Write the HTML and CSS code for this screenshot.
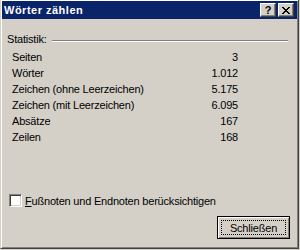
FILE: index.html
```html
<!DOCTYPE html>
<html lang="de">
<head>
    <meta charset="UTF-8">
    <title>Wörter zählen</title>
    <link rel="stylesheet" href="styles.css">
</head>
<body>
    <div class="window">
        <!-- Titelleiste -->
        <div class="titlebar">
            <span class="title">Wörter zählen</span>
            <div class="caption-buttons">
                <button class="cap-btn help">?</button>
                <button class="cap-btn close">
                    <svg width="8" height="7" viewBox="0 0 8 7" shape-rendering="crispEdges">
                        <path d="M0 0h2v1h-2z M6 0h2v1h-2z M1 1h2v1h-2z M5 1h2v1h-2z M2 2h4v1h-4z M3 3h2v1h-2z M2 4h4v1h-4z M1 5h2v1h-2z M5 5h2v1h-2z M0 6h2v1h-2z M6 6h2v1h-2z" fill="#000"/>
                    </svg>
                </button>
            </div>
        </div>

        <div class="dialog-body">
            <div class="group-label">
                <span>Statistik:</span>
                <span class="rule"></span>
            </div>

            <div class="stats">
                <span>Seiten</span><span class="num">3</span>
                <span>Wörter</span><span class="num">1.012</span>
                <span>Zeichen (ohne Leerzeichen)</span><span class="num">5.175</span>
                <span>Zeichen (mit Leerzeichen)</span><span class="num">6.095</span>
                <span>Absätze</span><span class="num">167</span>
                <span>Zeilen</span><span class="num">168</span>
            </div>

            <label class="check">
                <span class="box"></span>
                <span><u>F</u>ußnoten und Endnoten berücksichtigen</span>
            </label>

            <div class="actions">
                <button class="btn default"><span class="focus">Schließen</span></button>
            </div>
        </div>
    </div>
</body>
</html>
```

FILE: styles.css
```css
:root {
    --face: #d4d0c8;
    --shadow: #808080;
    --dark: #404040;
    --navy: #0a246a;
}

body {
    margin: 0;
    background: var(--face);
    font-family: 'Liberation Sans', Arial, sans-serif;
    font-size: 11px;
    color: #000;
}

.window {
    width: 299px;
    height: 249px;
    box-sizing: border-box;
    background: var(--face);
    border-left: 1px solid var(--face);
    border-right: 1px solid var(--dark);
    border-bottom: 1px solid var(--dark);
    box-shadow: inset 1px 1px #fff, inset -1px -1px var(--shadow);
    display: flex;
    flex-direction: column;
}

.titlebar {
    height: 18px;
    margin: 1px 1px 0 1px;
    background: var(--navy);
    display: flex;
    align-items: center;
    justify-content: space-between;
    padding: 0 3px 0 2px;
}
.title {
    color: #fff;
    font-weight: bold;
    letter-spacing: 0.5px;
    line-height: 18px;
}
.caption-buttons {
    display: flex;
    gap: 2px;
}
.cap-btn {
    width: 16px;
    height: 14px;
    padding: 0;
    margin: 0;
    box-sizing: border-box;
    background: var(--face);
    border: 1px solid;
    border-color: #fff var(--dark) var(--dark) #fff;
    box-shadow: inset -1px -1px var(--shadow);
    display: flex;
    align-items: center;
    justify-content: center;
    font-family: 'Liberation Sans', Arial, sans-serif;
    font-weight: bold;
    font-size: 11px;
    line-height: 12px;
    color: #000;
}
.cap-btn svg { display: block; margin-left: -1px; }

.dialog-body {
    flex: 1;
    padding: 12px 8px 0 6px;
    display: flex;
    flex-direction: column;
    line-height: 16px;
    letter-spacing: -0.2px;
}

.group-label {
    display: flex;
    align-items: flex-start;
    gap: 5px;
}
.rule {
    flex: 1;
    margin: 9px 2px 0 0;
    border-top: 1px solid var(--shadow);
    border-bottom: 1px solid #fff;
}

.stats {
    margin: 2px 0 0 5px;
    width: 226px;
    display: grid;
    grid-template-columns: 1fr auto;
}
.num { text-align: right; }

.check {
    margin: 49px 0 0 2px;
    display: flex;
    align-items: center;
    gap: 3px;
    height: 13px;
}
.box {
    width: 13px;
    height: 13px;
    box-sizing: border-box;
    background: #fff;
    border: 1px solid;
    border-color: var(--shadow) #fff #fff var(--shadow);
    box-shadow: inset 1px 1px var(--dark), inset -1px -1px var(--face);
}

.actions {
    margin-top: 9px;
    display: flex;
    justify-content: flex-end;
}
.btn {
    width: 73px;
    height: 23px;
    box-sizing: border-box;
    padding: 3px;
    margin: 0;
    background: var(--face);
    border: 1px solid #000;
    box-shadow: inset 1px 1px #fff, inset -1px -1px var(--shadow);
    font-family: 'Liberation Sans', Arial, sans-serif;
    font-size: 11px;
    color: #000;
    display: flex;
}
.focus {
    flex: 1;
    border: 1px dotted #000;
    display: flex;
    align-items: center;
    justify-content: center;
    letter-spacing: -0.2px;
}
```
